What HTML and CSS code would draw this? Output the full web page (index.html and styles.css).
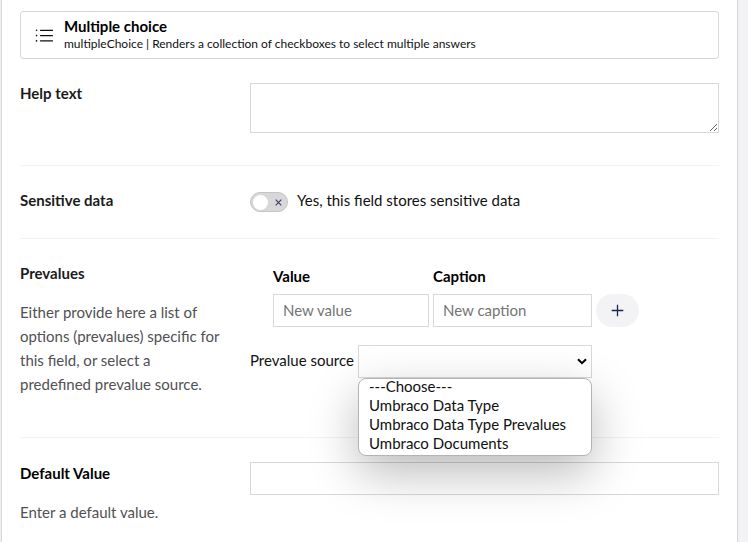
FILE: index.html
```
<!DOCTYPE html>
<html lang="en">
<head>
<meta charset="utf-8">
<title>Field settings</title>
<link rel="stylesheet" href="styles.css">
</head>
<body>
<main class="panel">
  <div class="type-card">
    <svg class="type-icon" width="18" height="14" viewBox="0 0 18 14" fill="none" stroke="#111" stroke-width="1.3" stroke-linecap="round">
      <path d="M5.5 2.3h12M5.5 7.6h12M5.5 12.9h12"/>
      <path d="M1.5 2.3h.1M1.5 7.6h.1M1.5 12.9h.1" stroke-width="1.6"/>
    </svg>
    <div>
      <div class="type-name">Multiple choice</div>
      <div class="type-desc">multipleChoice | Renders a collection of checkboxes to select multiple answers</div>
    </div>
  </div>

  <section class="row row-help">
    <div class="side"><div class="label">Help text</div></div>
    <div class="control"><textarea class="box help"></textarea></div>
  </section>

  <section class="row row-sensitive">
    <div class="side"><div class="label">Sensitive data</div></div>
    <div class="control toggle-line">
      <span class="toggle"><span class="knob"></span>
        <svg class="cross" width="7" height="7" viewBox="0 0 7 7" stroke="#40416c" stroke-width="1.2"><path d="M.7.7l5.6 5.6M6.3.7L.7 6.3"/></svg>
      </span>
      <span class="toggle-text">Yes, this field stores sensitive data</span>
    </div>
  </section>

  <section class="row row-prevalues">
    <div class="side">
      <div class="label">Prevalues</div>
      <p class="desc">Either provide here a list of options (prevalues) specific for this field, or select a predefined prevalue source.</p>
    </div>
    <div class="control">
      <div class="grid">
        <div class="head">Value</div>
        <div class="head">Caption</div>
        <div></div>
        <input class="box" placeholder="New value">
        <input class="box" placeholder="New caption">
        <button class="add" aria-label="Add"><svg width="13" height="13" viewBox="0 0 13 13" stroke="#1b264f" stroke-width="1.3"><path d="M6.5.7v11.6M.7 6.5h11.6"/></svg></button>
      </div>
      <div class="source">
        <span class="source-label">Prevalue source</span>
        <div class="select box">
          <svg width="10" height="7" viewBox="0 0 10 7" fill="none" stroke="#000" stroke-width="2"><path d="M1 1.2l4 4 4-4"/></svg>
          <ul class="menu">
            <li>---Choose---</li>
            <li>Umbraco Data Type</li>
            <li>Umbraco Data Type Prevalues</li>
            <li>Umbraco Documents</li>
          </ul>
        </div>
      </div>
    </div>
  </section>

  <section class="row row-default">
    <div class="side">
      <div class="label dark">Default Value</div>
      <p class="desc">Enter a default value.</p>
    </div>
    <div class="control"><input class="box"></div>
  </section>
</main>
</body>
</html>
```
FILE: styles.css
```
* { box-sizing: border-box; }
body {
  margin: 0;
  height: 542px;
  overflow: hidden;
  background: #f3f3f5;
  font: 15px/20px Lato, sans-serif;
  color: #111;
}
.panel {
  width: 737px;
  height: 542px;
  margin-left: 1px;
  padding: 11px 18px 0;
  background: #fff;
  border: solid #d8d7d9;
  border-width: 0 1px;
  box-shadow: 0 0 1px #d8d7d9;
}
.type-card {
  display: flex;
  align-items: center;
  gap: 11px;
  height: 48px;
  padding: 0 0 0 14px;
  border: 1px solid #d8d7d9;
  border-radius: 3px;
}
.type-icon { flex: none; }
.type-name { font-weight: 700; line-height: 16px; padding-bottom: 2px; color: #000; }
.type-desc { font-size: 12px; line-height: 16px; }
.row { display: flex; border-bottom: 1px solid #f3f3f5; padding-top: 24px; }
.row-help { height: 107px; }
.row-sensitive { height: 73px; }
.row-prevalues { height: 199px; }
.row-default { border: 0; }
.side { width: 200px; margin: -1px 30px 0 0; flex: none; }
.row-default .side { margin-top: 0; }
.label { font-weight: 700; line-height: 22px; color: #1b1b1b; }
.dark { color: #000; }
.desc { margin: 16px 0 0; line-height: 24px; color: #515054; }
.control { flex: 1; min-width: 0; }
.box {
  display: block;
  width: 100%;
  height: 33px;
  margin: 0;
  padding: 0 9px 1px;
  border: 1px solid #d8d7d9;
  border-radius: 0;
  background: #fff;
  font: 15px Lato, sans-serif;
}
.box::placeholder { color: #757575; }
.help { height: 50px; }
.toggle-line { display: flex; gap: 9px; }
.toggle {
  display: flex;
  align-items: center;
  justify-content: space-between;
  width: 38px;
  height: 20px;
  margin-top: 2px;
  padding: 0 5px 0 2px;
  border: 1px solid #c4c4c4;
  border-radius: 10px;
  background: #d8d7d9;
}
.knob { width: 15px; height: 15px; border-radius: 50%; background: #fff; }
.toggle-text { line-height: 20px; }
.grid {
  display: grid;
  grid-template-columns: 156px 159px 43px;
  column-gap: 4px;
  row-gap: 8px;
  margin-left: 23px;
  padding-top: 3px;
}
.head { font-weight: 700; color: #000; }
.add {
  display: flex;
  align-items: center;
  justify-content: center;
  height: 33px;
  padding: 0;
  border: 0;
  border-radius: 17px;
  background: #f3f3f5;
}
.source { display: flex; align-items: center; justify-content: space-between; width: 342px; margin-top: 18px; }
.source-label { padding-bottom: 3px; }
.select {
  position: relative;
  display: flex;
  align-items: center;
  justify-content: flex-end;
  width: 234px;
  padding: 0 4px;
}
.menu {
  position: absolute;
  z-index: 1;
  top: 32px;
  left: -1px;
  width: 234px;
  height: 78px;
  margin: 0;
  padding: 0 0 0 10px;
  list-style: none;
  line-height: 19px;
  border: 1px solid #b4b4b4;
  border-radius: 8px;
  background: #fff;
  box-shadow: 0 17px 48px rgba(0, 0, 0, .27);
}
.menu li { position: relative; top: -2px; }
```
